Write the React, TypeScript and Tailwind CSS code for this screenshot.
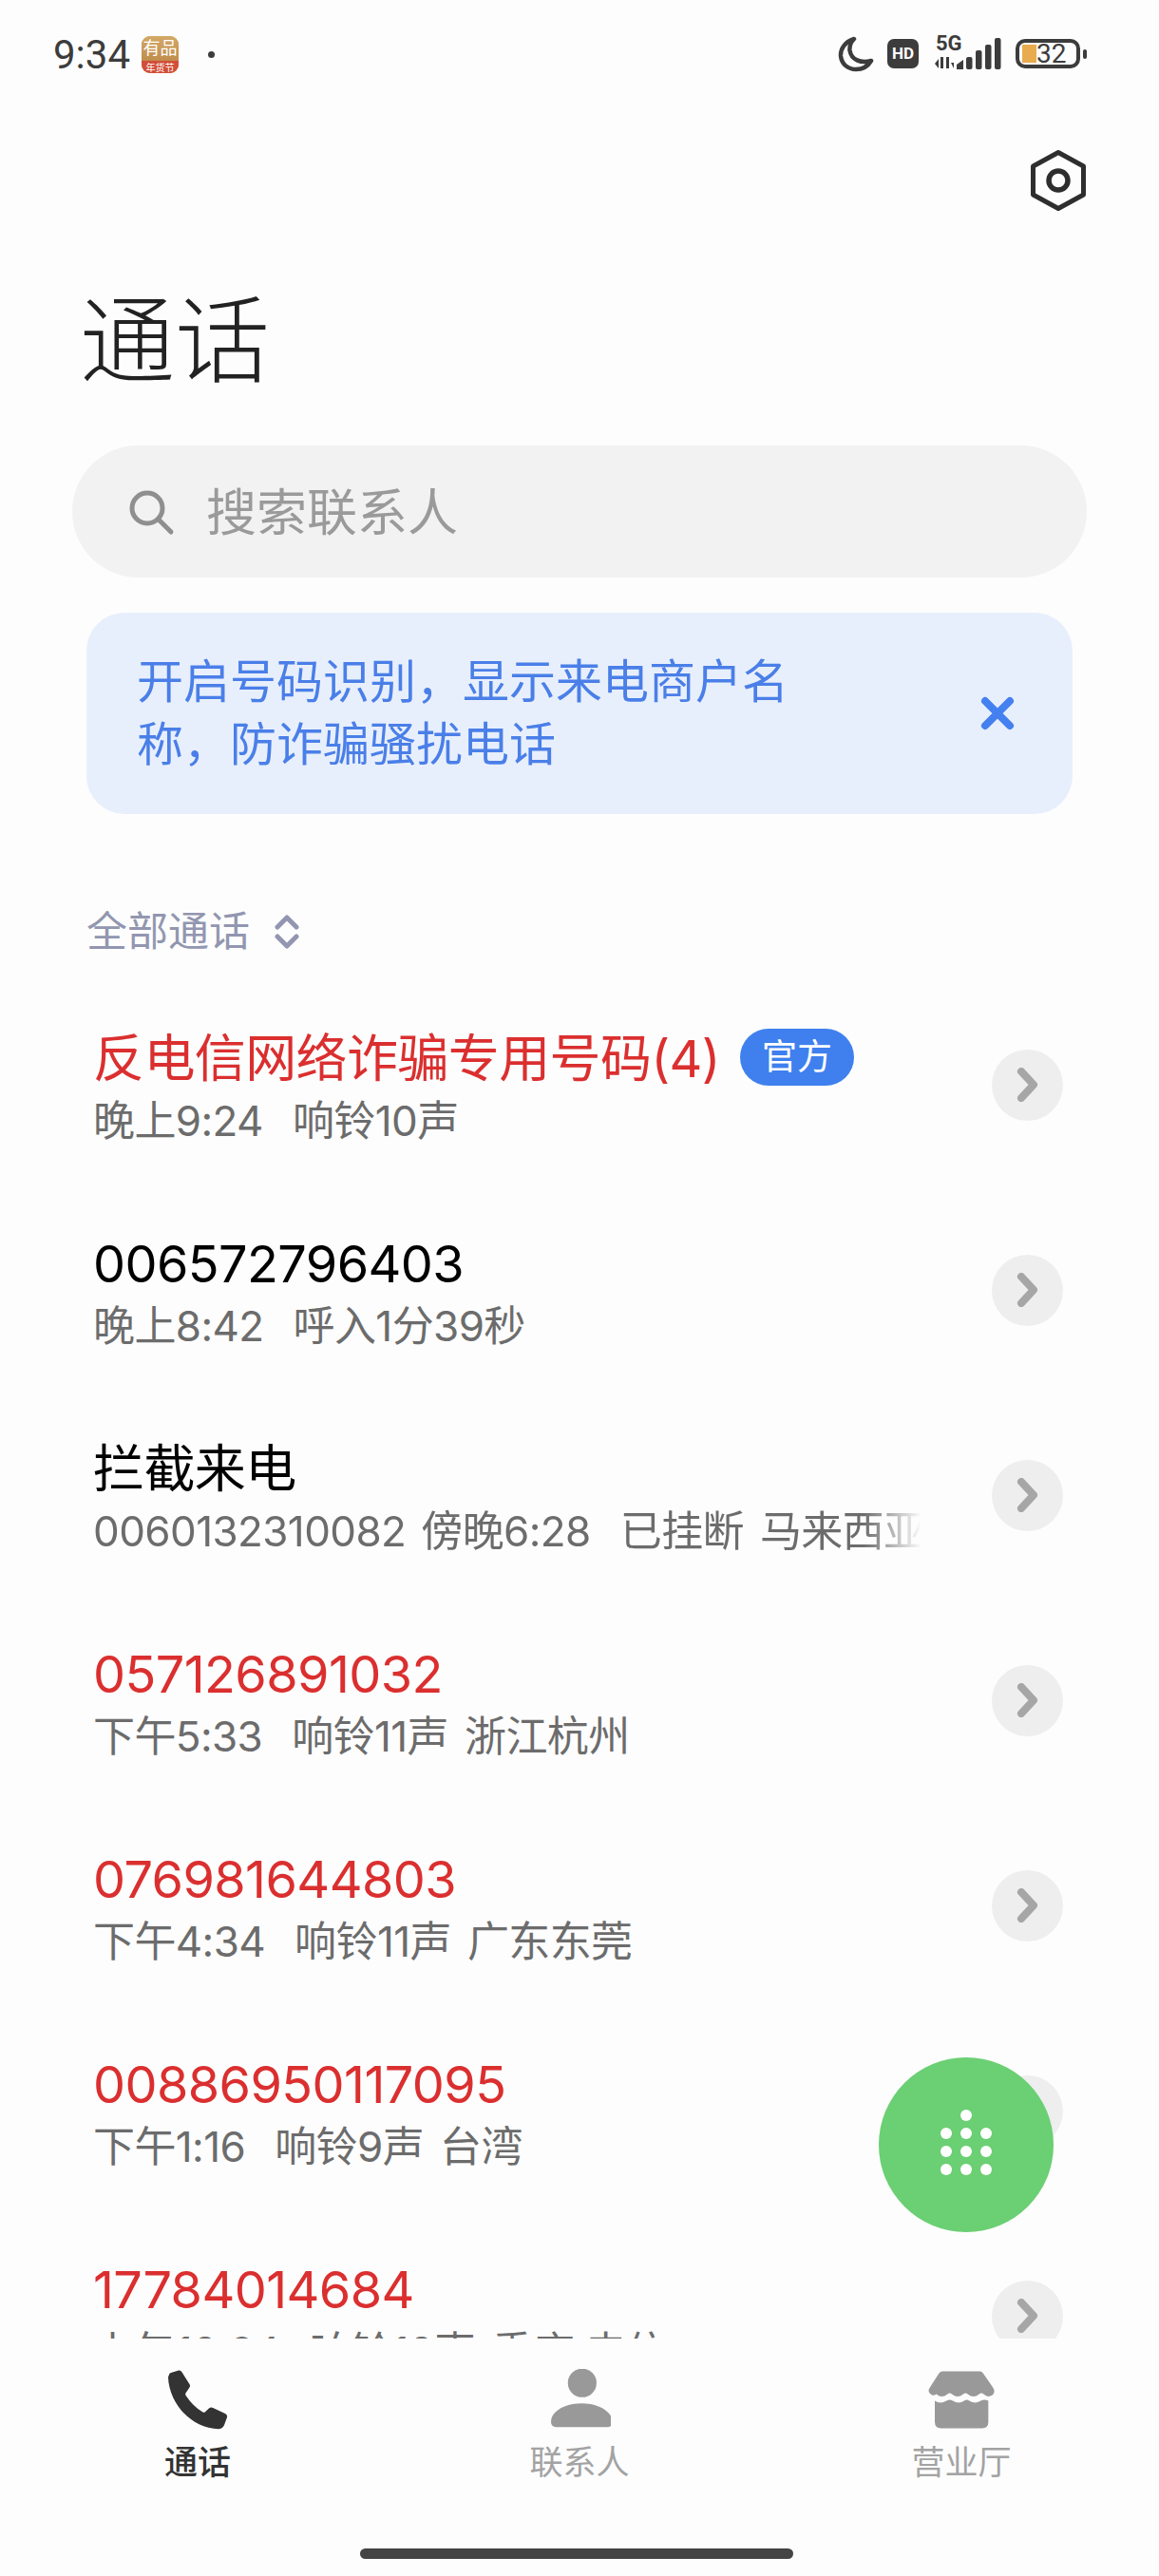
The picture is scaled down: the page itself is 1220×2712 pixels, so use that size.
const FONT = "font-['Inter','Noto_Sans_CJK_SC','Noto_Sans',sans-serif]";

type Call = {
  name: string;
  missed?: boolean;
  tag?: string;
  number?: string;
  time: string;
  detail?: string;
  place?: string;
  fade?: boolean;
};

const calls: Call[] = [
  { name: "反电信网络诈骗专用号码(4)", missed: true, tag: "官方", time: "晚上9:24", detail: "响铃10声" },
  { name: "006572796403", time: "晚上8:42", detail: "呼入1分39秒" },
  { name: "拦截来电", number: "0060132310082", time: "傍晚6:28", detail: "已挂断", place: "马来西亚", fade: true },
  { name: "057126891032", missed: true, time: "下午5:33", detail: "响铃11声", place: "浙江杭州" },
  { name: "076981644803", missed: true, time: "下午4:34", detail: "响铃11声", place: "广东东莞" },
  { name: "00886950117095", missed: true, time: "下午1:16", detail: "响铃9声", place: "台湾" },
  { name: "17784014684", missed: true, time: "上午10:24", detail: "响铃10声", place: "重庆 电信" },
];

function StatusBar() {
  return (
    <div className="h-[114px] shrink-0 flex items-start justify-between pl-[56px] pr-[83px] pt-[38px] text-[#3c3c3c]">
      <div className="flex items-center h-[39px]">
        <span className="text-[42px] leading-[39px] w-[93px] font-['Roboto',sans-serif]">9:34</span>
        <div className="w-[39px] h-[39px] rounded-[9px] overflow-hidden flex flex-col text-white bg-[#c99a56]">
          <div className="h-[26px] flex items-center justify-center text-[18px] leading-none bg-gradient-to-b from-[#d3a866] to-[#c08d4c]">有品</div>
          <div className="flex-1 flex items-center justify-center text-[10px] leading-none bg-[#d24e38]">年货节</div>
        </div>
        <div className="ml-[31px] w-[7px] h-[7px] rounded-full bg-[#3c3c3c]" />
      </div>
      <div className="flex items-center h-[37px]">
        <svg width="38" height="38" viewBox="0 0 38 38" fill="none" className="mr-[14px]">
          <path d="M17 3 C7 6 2.500 14 3 21 C4 30 11 35 19 35 C27 35 32 31 35 26 C24 29 14 25 12.500 15 C12 10 14 6 17 3 Z" stroke="#3c3c3c" strokeWidth="4.500" strokeLinejoin="round" />
        </svg>
        <div className="w-[33px] h-[31px] rounded-[7px] bg-[#3c3c3c] text-white text-[17px] font-bold leading-[31px] text-center font-['Roboto',sans-serif]">HD</div>
        <div className="relative ml-[17px] w-[74px] h-[36px]">
          <span className="absolute left-[1px] top-[-4px] text-[22px] leading-[22px] font-bold font-['Roboto',sans-serif]">5G</span>
          <svg width="74" height="36" viewBox="0 0 74 36" fill="#3c3c3c">
            <path d="M0 28 L4 23 L4 33 Z M6 21 H9 V33 H6 Z M12 21 H15 V33 H12 Z M17 27 L20 27 L20 33 Z" />
            <path d="M23 34 V29 L30 24 V34 Z" />
            <rect x="33" y="21" width="6.500" height="13" rx="2" />
            <rect x="43" y="14" width="6.500" height="20" rx="2" />
            <rect x="53" y="8" width="6.500" height="26" rx="2" />
            <rect x="63" y="1" width="6.500" height="33" rx="2" />
          </svg>
        </div>
        <div className="relative ml-[11px] w-[68px] h-[31px] border-[4px] border-[#3c3c3c] rounded-[10px] flex items-center">
          <div className="ml-[3px] w-[15px] h-[19px] bg-[#e8ac4e]" />
          <span className="text-[28px] leading-none font-['Roboto',sans-serif]">32</span>
          <div className="absolute right-[-11px] top-[7px] w-[4px] h-[10px] rounded-full bg-[#3c3c3c]" />
        </div>
      </div>
    </div>
  );
}

function Row({ call }: { call: Call }) {
  return (
    <div className="h-[216px] shrink-0 flex items-center justify-between pl-[98px] pr-[101px]">
      <div className="pt-[9px]">
        <div className="flex items-center">
          <span className={`text-[54px] leading-[66px] tracking-[-0.6px] whitespace-nowrap ${call.missed ? "text-[#db2f2f]" : "text-black"}`}>
            {call.name}
          </span>
          {call.tag && (
            <span className="ml-[21px] mt-[-3px] w-[120px] h-[60px] rounded-full bg-[#3f80ee] text-white text-[37px] leading-[60px] text-center">
              {call.tag}
            </span>
          )}
        </div>
        <div className={`flex w-[872px] overflow-hidden whitespace-nowrap text-[44px] leading-[64px] tracking-[-0.6px] text-[#6c6c6c] ${call.fade ? "[mask-image:linear-gradient(to_right,black_93%,transparent_100%)]" : ""}`}>
          {call.number && <span className="mr-[16px]">{call.number}</span>}
          <span className="mr-[31px]">{call.time}</span>
          {call.detail && <span className="mr-[17px]">{call.detail}</span>}
          {call.place && <span>{call.place}</span>}
        </div>
      </div>
      <div className="w-[75px] h-[75px] rounded-full bg-[#eeeeee] flex items-center justify-center">
        <svg width="24" height="36" viewBox="0 0 24 36" fill="none">
          <path d="M5 4 L18 18 L5 32" stroke="#a6a6a6" strokeWidth="8" strokeLinecap="round" strokeLinejoin="round" />
        </svg>
      </div>
    </div>
  );
}

function Dialpad() {
  const dots = ["", "x", "", "x", "x", "x", "x", "x", "x", "x", "x", "x"];
  return (
    <div className="grid grid-cols-3 gap-x-[9px] gap-y-[7px] w-[54px] mb-[6px]">
      {dots.map((d, i) => (
        <div key={i} className={`w-[12px] h-[12px] rounded-full ${d ? "bg-white" : ""}`} />
      ))}
    </div>
  );
}

function NavBar() {
  return (
    <div className="h-[250px] shrink-0 flex flex-col items-center">
      <div className="w-full flex h-[221px] pt-[32px] pl-[8px]">
        <div className="w-[400px] flex flex-col items-center">
          <svg width="65" height="65" viewBox="78 74 194 194">
            <path d="M84 92 Q84 88 90 86 L112 79 Q120 77 124 84 L148 122 Q152 128 147 134 L136 150 Q134 154 137 158 Q160 192 190 210 Q194 212 198 208 L210 197 Q215 193 222 196 L260 214 Q268 218 266 226 L258 248 Q254 262 240 263 C150 260 84 180 81 100 Z" fill="#333333" />
          </svg>
          <span className="mt-[8px] text-[35px] leading-[50px] text-[#333333] font-medium">通话</span>
        </div>
        <div className="w-[404px] flex flex-col items-center">
          <svg width="65" height="65" viewBox="78 74 194 194" fill="#999999">
            <circle cx="182" cy="118" r="45" />
            <path d="M84 240 C84 205 130 182 180 182 C230 182 276 205 276 240 Q276 257 260 257 L100 257 Q84 257 84 240 Z" />
          </svg>
          <span className="mt-[8px] text-[35px] leading-[50px] text-[#a3a3a3]">联系人</span>
        </div>
        <div className="w-[400px] flex flex-col items-center">
          <svg width="70" height="65" viewBox="82 78 210 194" fill="#999999">
            <path d="M128 85 H244 Q252 85 256 92 L286 135 Q296 150 285 160 Q270 170 257 157 Q250 151 243 157 Q225 172 207 157 Q200 151 193 157 Q175 172 157 157 Q150 151 143 157 Q125 172 108 157 Q98 165 90 157 Q78 148 88 135 L116 92 Q120 85 128 85 Z" />
            <path d="M103 178 Q120 190 140 178 Q150 172 160 178 Q178 190 196 178 Q204 172 212 178 Q230 190 248 178 Q260 172 272 178 V245 Q272 265 252 265 H123 Q103 265 103 245 Z" />
          </svg>
          <span className="mt-[8px] text-[35px] leading-[50px] text-[#a3a3a3]">营业厅</span>
        </div>
      </div>
      <div className="w-[456px] h-[11px] mr-[6px] rounded-full bg-[#444444]" />
    </div>
  );
}

export default function App() {
  return (
    <div className={`relative w-[1220px] h-[2712px] overflow-hidden flex flex-col bg-[#fdfdfd] ${FONT}`}>
      <StatusBar />

      {/* settings */}
      <div className="mt-[43px] h-[65px] shrink-0 flex justify-end pr-[76px]">
        <svg width="60" height="66" viewBox="0 0 60 66" fill="none" stroke="#2e2e2e">
          <path d="M30 3.500 L56.500 18 V48 L30 62.500 L3.500 48 V18 Z" strokeWidth="5" strokeLinejoin="round" />
          <circle cx="30" cy="33" r="10" strokeWidth="5.500" />
        </svg>
      </div>

      <h1 className="mt-[89px] ml-[84px] mb-[1px] text-[100px] leading-[96px] font-light text-[#222222] shrink-0">通话</h1>

      {/* search */}
      <div className="mt-[61px] mx-[76px] h-[139px] shrink-0 rounded-full bg-[#f2f2f2] flex items-center pl-[58px]">
        <svg width="50" height="50" viewBox="0 0 50 50" fill="none" stroke="#8f8f8f" strokeWidth="5" strokeLinecap="round">
          <circle cx="21" cy="21" r="16" />
          <path d="M33 33 L46 46" />
        </svg>
        <span className="ml-[33px] mt-[4px] text-[53px] text-[#9a9a9a]">搜索联系人</span>
      </div>

      {/* banner */}
      <div className="mt-[37px] mx-[91px] h-[212px] shrink-0 rounded-[40px] bg-[#e8effc] flex items-center justify-between pl-[53px] pr-[61px]">
        <p className="w-[700px] text-[49px] leading-[66px] text-[#4a7fe8]">开启号码识别，显示来电商户名称，防诈骗骚扰电话</p>
        <svg width="36" height="36" viewBox="0 0 36 36" fill="none" stroke="#4480f0" strokeWidth="8" strokeLinecap="round">
          <path d="M5 5 L31 31 M31 5 L5 31" />
        </svg>
      </div>

      {/* filter */}
      <div className="mt-[94px] ml-[91px] h-[60px] shrink-0 flex items-center">
        <span className="mb-[2px] text-[43px] text-[#9296b0]">全部通话</span>
        <svg width="28" height="36" viewBox="0 0 28 36" fill="none" stroke="#9296b0" strokeWidth="5" strokeLinecap="round" strokeLinejoin="round" className="ml-[25px]">
          <path d="M4 13 L14 3 L24 13 M4 23 L14 33 L24 23" />
        </svg>
      </div>

      {/* call list */}
      <div className="mt-[23px] flex-1 min-h-0 overflow-hidden flex flex-col">
        {calls.map((c) => (
          <Row key={c.name} call={c} />
        ))}
      </div>

      <NavBar />

      <button className="absolute left-[925px] top-[2166px] w-[184px] h-[184px] rounded-full bg-[#6bcf73] flex items-center justify-center">
        <Dialpad />
      </button>
    </div>
  );
}
